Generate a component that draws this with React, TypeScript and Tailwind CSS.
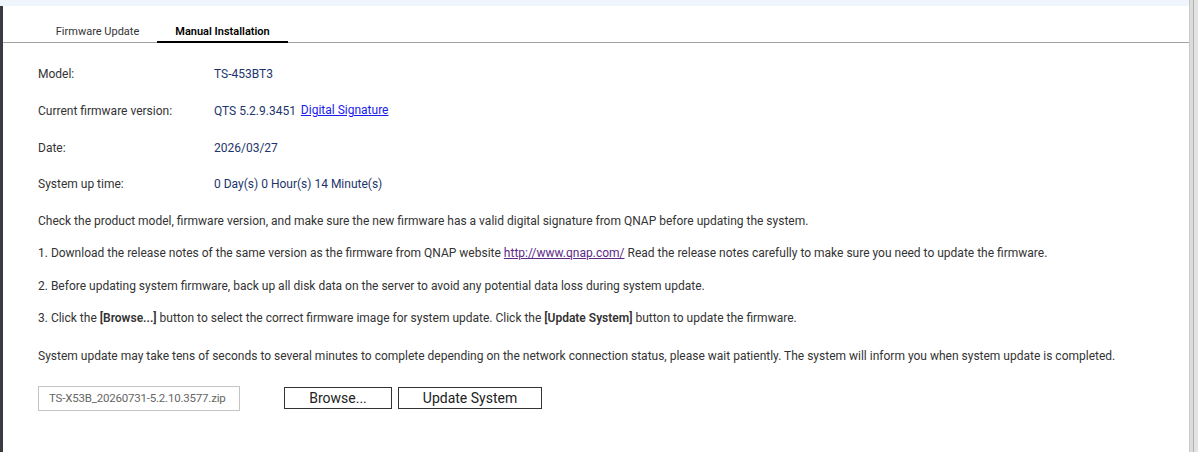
import React from 'react';

const font = { fontFamily: 'Roboto, "Liberation Sans", sans-serif' };

const infoRows: { label: string; value: React.ReactNode }[] = [
  { label: 'Model:', value: 'TS-453BT3' },
  {
    label: 'Current firmware version:',
    value: (
      <>
        QTS 5.2.9.3451{' '}
        <a href="#" className="relative -top-px ml-0.5 text-[#1a1aee] underline">
          Digital Signature
        </a>
      </>
    )
  },
  { label: 'Date:', value: '2026/03/27' },
  { label: 'System up time:', value: '0 Day(s) 0 Hour(s) 14 Minute(s)' }
];

const Tabs = () => (
  <div className="flex h-[37px] items-end border-b border-[#a3a3a3] pl-[35px]">
    <button className="h-full w-[119px] pt-[16px] text-[11px] text-[#333]">Firmware Update</button>
    <button className="relative -mb-px h-full w-[131px] border-b-2 border-black pt-[16px] text-[11px] font-semibold text-black">
      Manual Installation
    </button>
  </div>
);

export default function App() {
  return (
    <div className="flex h-[452px] w-[1198px] bg-white" style={font}>
      <div className="flex min-w-0 flex-1 flex-col">
        <div className="h-[6px] bg-[#eff4fd]" />
        <div className="flex flex-1">
          <div className="w-[3px] bg-[#3b3b42]" />
          <div className="flex-1">
            <Tabs />
            <div className="px-[35px] pt-[13px] text-[12px] text-[#333]">
              <div className="flex flex-col">
                {infoRows.map((row) => (
                  <div key={row.label} className="flex h-[36.7px] items-center">
                    <span className="w-[176px]">{row.label}</span>
                    <span className="text-[#1d356b]">{row.value}</span>
                  </div>
                ))}
              </div>
              <div className="mt-[9px] flex flex-col gap-[14.5px] leading-[18px]">
                <p>
                  Check the product model, firmware version, and make sure the new firmware has a valid
                  digital signature from QNAP before updating the system.
                </p>
                <p>
                  1. Download the release notes of the same version as the firmware from QNAP website{' '}
                  <a href="#" className="text-[#5b2a86] underline">
                    http://www.qnap.com/
                  </a>{' '}
                  Read the release notes carefully to make sure you need to update the firmware.
                </p>
                <p>
                  2. Before updating system firmware, back up all disk data on the server to avoid any
                  potential data loss during system update.
                </p>
                <p>
                  3. Click the <b className="font-semibold">[Browse...]</b> button to select the correct
                  firmware image for system update. Click the{' '}
                  <b className="font-semibold">[Update System]</b> button to update the firmware.
                </p>
                <p className="mt-[5px]">
                  System update may take tens of seconds to several minutes to complete depending on the
                  network connection status, please wait patiently. The system will inform you when
                  system update is completed.
                </p>
              </div>
              <div className="mt-[21px] flex items-center">
                <div className="flex h-[25px] w-[202px] items-center overflow-hidden whitespace-nowrap border border-[#c4c4c4] px-[10px] text-[11.5px] tracking-[-0.2px] text-[#666]">
                  TS-X53B_20260731-5.2.10.3577.zip
                </div>
                <button className="ml-[44px] h-[22px] w-[108px] border border-[#333] text-[14px] text-[#222]">
                  Browse...
                </button>
                <button className="ml-[6px] h-[22px] w-[144px] border border-[#333] text-[14px] text-[#222]">
                  Update System
                </button>
              </div>
            </div>
          </div>
        </div>
      </div>
      {/* scrollbar track */}
      <div className="flex w-[9px]">
        <div className="w-px bg-[#c9c9c9]" />
        <div className="w-[3px] bg-[#dcdcdc]" />
        <div className="w-px bg-[#b3b3b3]" />
        <div className="flex-1 bg-[#e3e3e3]" />
      </div>
    </div>
  );
}
